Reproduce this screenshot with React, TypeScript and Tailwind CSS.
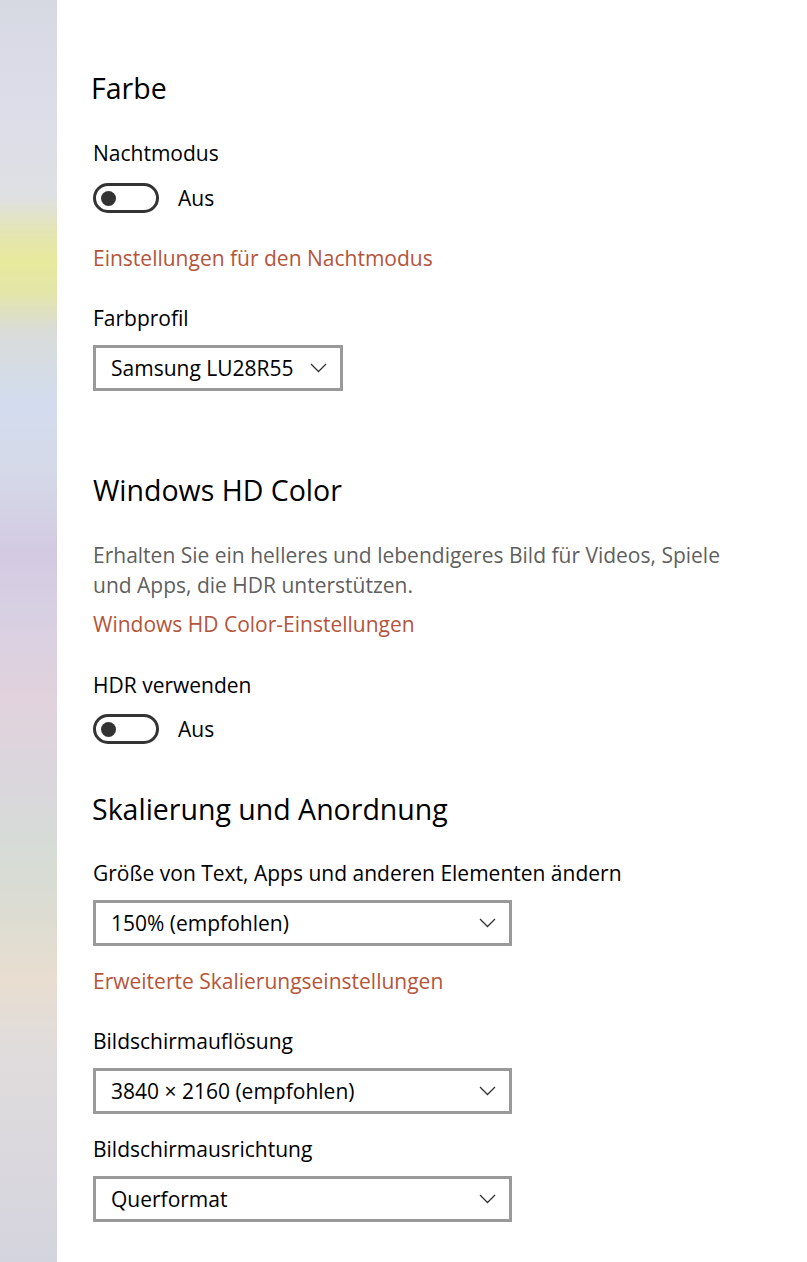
import React from 'react';

// Anzeige-Einstellungen (Windows 10) – Farbe, HD Color, Skalierung

function Toggle({ label }: { label: string }) {
  return (
    <div className="flex items-center h-[30px]">
      <div className="relative w-[66px] h-[30px] rounded-full border-[3px] border-[#333333] bg-white">
        <span className="absolute left-[5px] top-[4.5px] w-[15px] h-[15px] rounded-full bg-[#333333]" />
      </div>
      <span className="ml-[19px] text-[21px] leading-[30px] text-black">{label}</span>
    </div>
  );
}

function Chevron() {
  return (
    <svg width="17" height="10" viewBox="0 0 17 10" fill="none" className="shrink-0">
      <polyline points="1,1 8.5,8.5 16,1" stroke="#333333" strokeWidth="1.3" />
    </svg>
  );
}

function Dropdown({ value, width }: { value: string; width: string }) {
  return (
    <div
      className={`flex items-center justify-between h-[46px] border-[3px] border-[#999999] bg-white pl-[15px] pr-[13px] ${width}`}
    >
      <span className="text-[21px] leading-[30px] text-black whitespace-nowrap">{value}</span>
      <Chevron />
    </div>
  );
}

function Label({ children, className = '' }: { children: React.ReactNode; className?: string }) {
  return <p className={`text-[21px] leading-[30px] text-black ${className}`}>{children}</p>;
}

function LinkText({ children, className = '' }: { children: React.ReactNode; className?: string }) {
  return <p className={`text-[21px] leading-[30px] text-[#b4553b] ${className}`}>{children}</p>;
}

function Heading({ children, className = '' }: { children: React.ReactNode; className?: string }) {
  return <h2 className={`text-[28.5px] leading-[40px] text-black font-normal ${className}`}>{children}</h2>;
}

export default function App() {
  return (
    <div className="flex min-h-[1262px] bg-white" style={{ fontFamily: '"Open Sans", "Noto Sans", sans-serif' }}>
      <div className="w-[57px] shrink-0 bg-[linear-gradient(to_bottom,#d6d8e2_0px,#dcdde8_110px,#dfe0e4_195px,#e4e5b0_235px,#e7e99c_260px,#e4e6a8_292px,#dadcd8_330px,#d2dcee_400px,#d5d9e8_470px,#d3cae2_550px,#d8d0e2_620px,#e1d2dc_700px,#dad6dc_780px,#d6dcd6_850px,#dcdcd2_910px,#e8ddd0_980px,#e0dcdc_1050px,#d4d4de_1262px)]" />

      <main className="flex-1 pl-[36px] pt-[68px]">
        <Heading className="-ml-[2px]">Farbe</Heading>

        <Label className="mt-[30px]">Nachtmodus</Label>
        <div className="mt-[15px]">
          <Toggle label="Aus" />
        </div>
        <LinkText className="mt-[30px]">Einstellungen für den Nachtmodus</LinkText>

        <Label className="mt-[30px]">Farbprofil</Label>
        <div className="mt-[12px]">
          <Dropdown value="Samsung LU28R55" width="w-[250px]" />
        </div>

        <Heading className="mt-[79px]">Windows HD Color</Heading>
        <p className="mt-[30px] text-[21px] leading-[30px] text-[#5f5f5f]">
          Erhalten Sie ein helleres und lebendigeres Bild für Videos, Spiele
          <br />
          und Apps, die HDR unterstützen.
        </p>
        <LinkText className="mt-[9px]">Windows HD Color-Einstellungen</LinkText>

        <Label className="mt-[31px]">HDR verwenden</Label>
        <div className="mt-[14px]">
          <Toggle label="Aus" />
        </div>

        <Heading className="mt-[45px] -ml-[1px]">Skalierung und Anordnung</Heading>

        <Label className="mt-[29px]">Größe von Text, Apps und anderen Elementen ändern</Label>
        <div className="mt-[12px]">
          <Dropdown value="150% (empfohlen)" width="w-[419px]" />
        </div>
        <LinkText className="mt-[20px]">Erweiterte Skalierungseinstellungen</LinkText>

        <Label className="mt-[30px]">Bildschirmauflösung</Label>
        <div className="mt-[12px]">
          <Dropdown value="3840 × 2160 (empfohlen)" width="w-[419px]" />
        </div>

        <Label className="mt-[20px]">Bildschirmausrichtung</Label>
        <div className="mt-[12px]">
          <Dropdown value="Querformat" width="w-[419px]" />
        </div>
      </main>
    </div>
  );
}
